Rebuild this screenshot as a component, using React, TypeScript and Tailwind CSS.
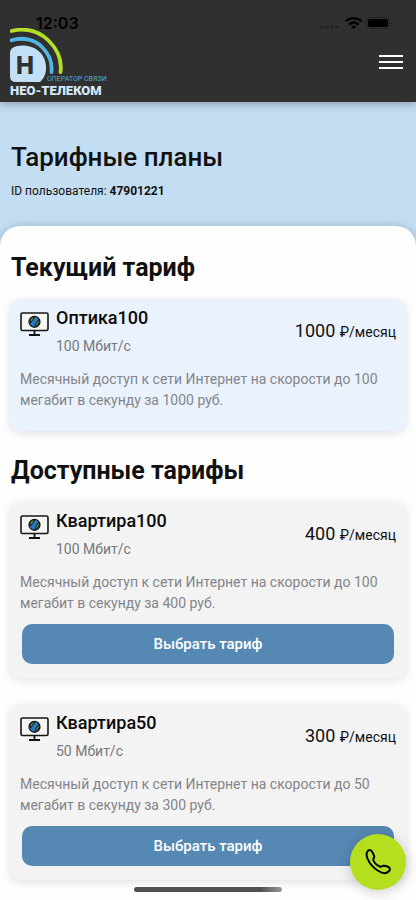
import React from "react";

type Plan = { name: string; speed: string; price: number; description: string };

const currentPlan: Plan = {
  name: "Оптика100",
  speed: "100 Мбит/с",
  price: 1000,
  description: "Месячный доступ к сети Интернет на скорости до 100 мегабит в секунду за 1000 руб.",
};

const availablePlans: Plan[] = [
  {
    name: "Квартира100",
    speed: "100 Мбит/с",
    price: 400,
    description: "Месячный доступ к сети Интернет на скорости до 100 мегабит в секунду за 400 руб.",
  },
  {
    name: "Квартира50",
    speed: "50 Мбит/с",
    price: 300,
    description: "Месячный доступ к сети Интернет на скорости до 50 мегабит в секунду за 300 руб.",
  },
];

function Logo() {
  return (
    <svg width="100" height="70" viewBox="0 0 100 70" role="img" aria-label="НЕО-ТЕЛЕКОМ">
      <path
        d="M1.500 3C14 0 28 2 39 13C48 22 52 33 50.500 44"
        fill="none"
        stroke="#b2de26"
        strokeWidth="3.800"
        strokeLinecap="round"
      />
      <path
        d="M1.500 12.300C12 9 24 11 32 19C39 26 42.500 35 41.500 44"
        fill="none"
        stroke="#50b4e6"
        strokeWidth="3.800"
        strokeLinecap="round"
      />
      <path d="M0 25Q0 21 4 19Q7 17.500 12 17.500C27 17.500 36 27 36 40C36 46 34 50 30 54H6Q0 54 0 48Z" fill="#c3dff5" />
      <text x="6" y="46" fontFamily="Inter, sans-serif" fontSize="24" fontWeight="800" fill="#303030">
        Н
      </text>
      <text x="37" y="53" fontFamily="Roboto, sans-serif" fontSize="7" fill="#50aad6">
        ОПЕРАТОР СВЯЗИ
      </text>
      <text x="0" y="67" fontFamily="Roboto, sans-serif" fontSize="13" fontWeight="900" fill="#d3e9fb">
        НЕО-ТЕЛЕКОМ
      </text>
    </svg>
  );
}

function StatusBar() {
  return (
    <div className="absolute inset-x-0 top-0 flex h-[46px] items-center justify-between pr-5 pl-9 text-black">
      <time className="font-['Inter'] text-[16px] leading-[20px] font-semibold">12:03</time>
      <svg width="78" height="14" viewBox="0 0 78 14" aria-hidden="true">
        <g fill="#222">
          <circle cx="4" cy="11" r="1.800" />
          <circle cx="9" cy="11" r="1.800" />
          <circle cx="14" cy="11" r="1.800" />
          <circle cx="19" cy="11" r="1.800" />
        </g>
        <g fill="none" stroke="#000" strokeWidth="2.400">
          <path d="M28 5.300C32 1 39 1 43.500 5.300" />
          <path d="M31 8.600C34 5.800 37.500 5.800 40.500 8.600" />
        </g>
        <path d="M33.300 10.500Q35.800 8.500 38.200 10.500L35.800 13Z" />
        <rect x="48.500" y="1.500" width="23" height="11" rx="3.500" fill="none" stroke="#222" />
        <rect x="50" y="3" width="20" height="8" rx="2" />
        <path d="M73.500 5.500Q75 7 73.500 8.500Z" fill="#171717" />
      </svg>
    </div>
  );
}

function MonitorIcon() {
  return (
    <svg className="mt-1 shrink-0" width="29" height="25" viewBox="0 0 29 25" aria-hidden="true">
      <rect x="1" y="1" width="27" height="17.500" rx="1.500" fill="#f5f5f3" stroke="#161616" strokeWidth="1.600" />
      <path d="M14.500 19V23M9 23H20" fill="none" stroke="#111" strokeWidth="1.800" />
      <circle cx="14.500" cy="9.800" r="5.500" fill="#2478c4" stroke="#111" strokeWidth="1.200" />
      <path
        d="M10 7.500L12.500 5L14.500 5.500L12.500 8.500L10.500 11ZM18.500 7.500L19.500 10L17.500 13.500L15 14.500L16 11.500Z"
        fill="#66803c"
        stroke="#111"
        strokeWidth=".9"
      />
    </svg>
  );
}

function PlanInfo({ plan }: { plan: Plan }) {
  return (
    <>
      <div className="flex justify-between">
        <div className="flex gap-[7px]">
          <MonitorIcon />
          <div>
            <h3 className="text-[18px] leading-[20px] font-medium text-[#0b0b0d]">{plan.name}</h3>
            <p className="mt-2 text-[14px] leading-[20px] text-[#76787c]">{plan.speed}</p>
          </div>
        </div>
        <p className="mt-3 text-[14px] leading-[22px] text-[#111]">
          <span className="mr-px text-[18px]">{plan.price}</span> ₽/месяц
        </p>
      </div>
      <p className="mt-[13px] text-[14px] leading-[21px] text-[#838589]">{plan.description}</p>
    </>
  );
}

export default function App() {
  return (
    <div className="min-h-screen bg-[#c3def3] font-['Roboto',sans-serif] text-[#111]">
      <header className="relative z-10 flex items-center justify-between bg-[#303030] pt-7 pr-[13px] pb-1 pl-[10px] shadow-[0_2px_8px_rgba(0,0,0,0.3)]">
        <Logo />
        <button type="button" aria-label="Меню" className="flex w-6 flex-col gap-1 pb-[2px]">
          <span className="h-[2px] bg-white" />
          <span className="h-[2px] bg-white" />
          <span className="h-[2px] bg-white" />
        </button>
        <StatusBar />
      </header>

      <section className="px-[11px] pt-[39px] pb-[26px]">
        <h1 className="text-[26px] leading-[32px] font-medium">Тарифные планы</h1>
        <p className="mt-[9px] text-[12px] leading-[18px]">
          ID пользователя: <strong>47901221</strong>
        </p>
      </section>

      <main className="rounded-t-[20px] bg-[#fefefe] px-[10px] pt-[26px] pb-5 shadow-[0_0_10px_rgba(0,0,0,0.2)]">
        <h2 className="pl-px text-[25px] leading-[32px] font-bold">Текущий тариф</h2>
        <article className="mt-[15px] rounded-[10px] bg-[#eaf2fe] px-[10px] pt-[9px] pb-5 shadow-[0_2px_10px_rgba(0,0,0,0.12)]">
          <PlanInfo plan={currentPlan} />
        </article>

        <h2 className="mt-6 pl-px text-[25px] leading-[32px] font-bold">Доступные тарифы</h2>
        <div className="mt-[15px] flex flex-col gap-[26px]">
          {availablePlans.map((plan) => (
            <article
              key={plan.name}
              className="rounded-[10px] bg-[#f3f3f3] px-[10px] pt-[9px] pb-[14px] shadow-[0_2px_10px_rgba(0,0,0,0.12)]"
            >
              <PlanInfo plan={plan} />
              <div className="mt-[10px] px-[2px]">
                <button
                  type="button"
                  className="h-10 w-full rounded-[10px] bg-[#5688b4] text-[15px] leading-[20px] font-medium text-white"
                >
                  Выбрать тариф
                </button>
              </div>
            </article>
          ))}
        </div>
      </main>

      <a
        href="tel:"
        aria-label="Позвонить"
        className="fixed right-[10px] bottom-[10px] z-20 flex size-14 items-center justify-center rounded-full bg-[#b4de1e] shadow-[0_2px_14px_rgba(0,0,0,0.2)]"
      >
        <svg width="26" height="26" viewBox="0 0 26 26" aria-hidden="true">
          <path
            d="M2.500 2.500C4-0 6.500 1 7.500 3.500L9 6.500C10 9 7.500 9.500 8.500 11.500C9.500 14 12 16.500 15 17.500C17 18.500 17 16.300 19 16.700L22.500 17.500C25.500 18.500 25.500 21 23.500 22.500C21 25 17.500 24.500 13.500 22C8.500 19 4.500 14.500 2.500 9.500C1.300 6.500 1.300 4 2.500 2.500Z"
            fill="none"
            stroke="#000"
            strokeWidth="2"
            strokeLinejoin="round"
          />
        </svg>
      </a>
      <div className="fixed bottom-2 left-1/2 z-20 h-[5px] w-[148px] -translate-x-1/2 rounded-full bg-linear-to-r from-[#505050] from-85% to-[#999]" />
    </div>
  );
}
